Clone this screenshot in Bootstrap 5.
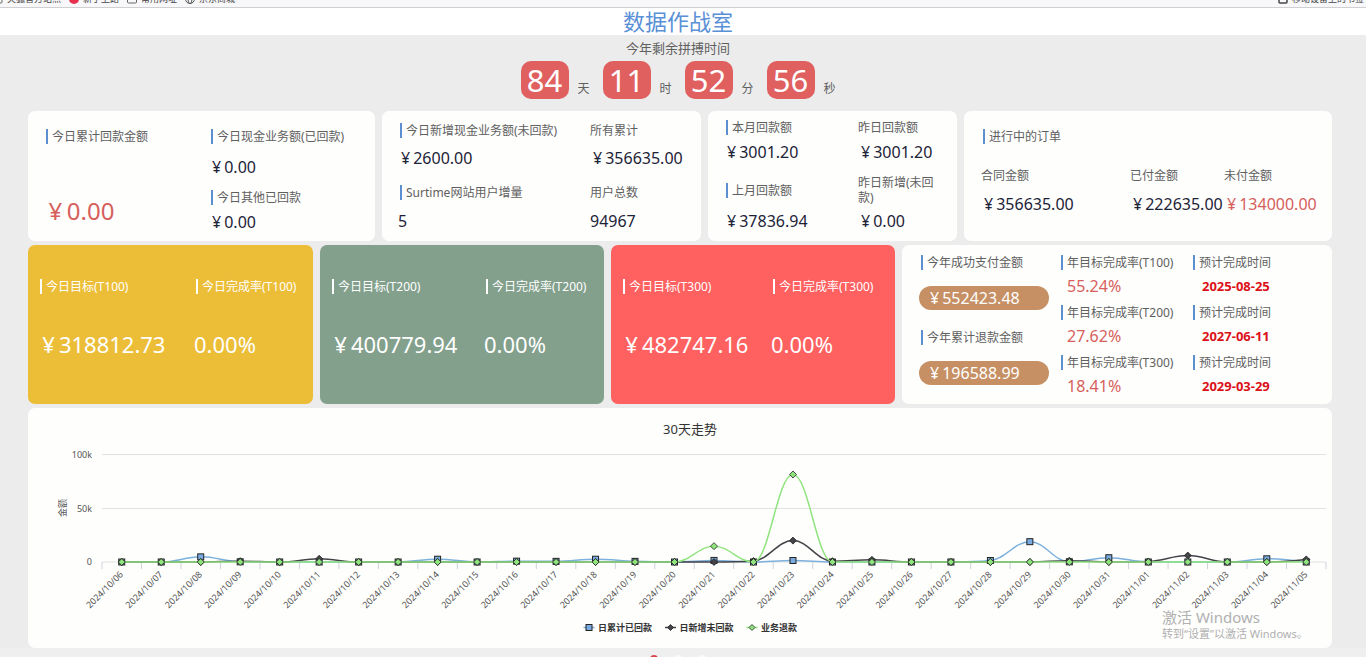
<!DOCTYPE html>
<html lang="zh-CN">
<head>
<meta charset="utf-8">
<meta name="viewport" content="width=device-width, initial-scale=1">
<title>数据作战室</title>
<link href="https://cdn.jsdelivr.net/npm/bootstrap@5.3.0/dist/css/bootstrap.min.css" rel="stylesheet">
<style>
  body { font-family: "Noto Sans", "Noto Sans CJK SC", sans-serif; background: #ececec; color: #606060; font-size: 12px; line-height: 15px; }
  .browser-bar { height: 8px; background: #f8f8fa; border-bottom: 1px solid #d0d0d2; font-size: 9px; line-height: 12px; padding: 0 2px 2px 0; }
  .browser-bar a { color: #444; height: 12px; }
  .browser-bar a:first-child svg { margin-left: -7px; }
  .browser-bar svg { width: 10px; height: 10px; }
  .title-band { background: #fff; height: 27px; padding-right: 10px; }
  .title-band h1 { font-size: 22px; line-height: 27px; color: #5a90d6; font-weight: 400; }
  .hero { padding: 4px 10px 12px 0; height: 76px; }
  .hero p { font-size: 13px; line-height: 18px; }
  .clock-row { padding-left: 13px; }
  .tick-box { width: 48px; height: 38px; border-radius: 10px; background: #e05f5f; color: #fff; font-size: 31px; line-height: 38px; }
  .tick-unit { width: 34px; line-height: 20px; padding-left: 9px; }
  .board { padding: 0 34px 0 28px; display: grid; gap: 4px; }
  .row-top, .row-mid { display: grid; gap: 7px; }
  .row-top { grid-template-columns: 347fr 319fr 249fr 368fr; min-height: 130px; }
  .row-mid { grid-template-columns: 285fr 284fr 284fr 430fr; min-height: 159px; }
  .panel { background: #fefefd; border-radius: 7px; }
  .lbl { margin-left: 2px; padding-left: 4px; border-left: 2px solid #5b8fd0; height: 15px; line-height: 15px; white-space: nowrap; }
  .val { font-size: 16px; line-height: 20px; color: #1d2337; white-space: nowrap; }
  .val-red { color: #d65f5c; }
  .val-big { font-size: 24px; line-height: 42px; color: #d65f5c; }
  .val-lg { font-size: 22px; line-height: 28px; white-space: nowrap; }
  .yen { display: inline-block; width: .95em; text-align: center; }
  .stat-grid { display: grid; align-items: center; align-content: start; }
  .p-income { grid-template-columns: 165fr 166fr; grid-template-rows: 15px 46px 14px 36px; padding: 18px 0 0 16px; }
  .p-income .val-big { grid-row: 3 / 5; grid-column: 1; align-self: start; }
  .p-users { grid-template-columns: 192fr 111fr; grid-template-rows: 15px 40px 28px 30px; padding: 12px 0 0 16px; }
  .p-month { grid-template-columns: 134fr 83fr; grid-template-rows: 15px 34px 42px 20px; padding: 9px 16px 0 16px; }
  .p-orders { grid-template-columns: 149fr 94fr 108fr; grid-template-rows: 28px 15px 20px; row-gap: 11px; padding: 18px 0 0 17px; }
  .p-orders .lbl { grid-column: 1 / 4; align-self: start; }
  .target { color: #fff; padding: 34px 0 0 10px; grid-template-rows: 15px 99px; }
  .target .lbl { border-color: #fff; }
  .t100 { background: #ecbe38; grid-template-columns: 156fr 119fr; }
  .t200 { background: #82a08c; grid-template-columns: 154fr 120fr; }
  .t300 { background: #ff6060; grid-template-columns: 150fr 124fr; }
  .p-year { display: grid; grid-template-columns: 140fr 132fr 141fr; padding: 10px 0 0 17px; }
  .pill { width: 130px; height: 24px; line-height: 24px; border-radius: 12px; background: #c69064; color: #fff; padding-left: 8px; }
  .pay .lbl { margin-bottom: 16px; }
  .pay + .pay { margin-top: 20px; }
  .goal + .goal { margin-top: 9px; }
  .goal .val { margin: 6px 0 0 8px; }
  .goal-date { font-size: 13px; line-height: 20px; font-weight: 700; color: #dc1018; margin: 6px 0 0 11px; }
  .chart-panel svg { display: block; width: 100%; height: auto; }
  .chart-panel svg text { font-size: 9px; fill: #555; }
  .chart-panel svg .chart-title { font-size: 13px; fill: #333; }
  .chart-panel svg .legend-label { font-weight: 700; fill: #333; }
  .notice { position: absolute; right: 26px; bottom: 7px; width: 144px; color: #b0b0b0; white-space: nowrap; font-size: 11px; line-height: 14px; }
  .notice strong { font-size: 15px; line-height: 20px; font-weight: 400; }
  .dock { height: 9px; background: #efefef; padding-right: 10px; }
  .dock span { width: 8px; height: 8px; border-radius: 50%; margin: 7px 8px 0; background: #fafafa; flex: none; }
  .dock .rec { background: #d9434a; }
</style>
</head>
<body class="overflow-hidden">
<nav class="browser-bar d-flex align-items-end overflow-hidden">
  <a href="#" class="d-flex align-items-center text-decoration-none text-nowrap"><svg viewBox="0 0 10 10" class="me-1"><rect x="1" y="1" width="8" height="8" rx="1" fill="none" stroke="#666"/></svg>火狐官方站点</a>
  <a href="#" class="d-flex align-items-center text-decoration-none text-nowrap ms-2"><svg viewBox="0 0 10 10" class="me-1"><circle cx="5" cy="5" r="5" fill="#e8304e"/></svg>新手上路</a>
  <a href="#" class="d-flex align-items-center text-decoration-none text-nowrap ms-2"><svg viewBox="0 0 10 10" class="me-1"><rect x="0.5" y="1" width="9" height="8" rx="1" fill="none" stroke="#666"/></svg>常用网址</a>
  <a href="#" class="d-flex align-items-center text-decoration-none text-nowrap ms-2"><svg viewBox="0 0 10 10" class="me-1"><g fill="none" stroke="#555"><circle cx="5" cy="5" r="4.5"/><ellipse cx="5" cy="5" rx="2" ry="4.5"/></g></svg>京东商城</a>
  <a href="#" class="d-flex align-items-center text-decoration-none text-nowrap ms-auto"><svg viewBox="0 0 10 10" class="me-1"><rect x="1" y="1" width="8" height="8" rx="1" fill="none" stroke="#444" stroke-width="1.5"/></svg>移动设备上的书签</a>
</nav>
<header class="title-band text-center"><h1 class="m-0">数据作战室</h1></header>
<section class="hero text-center">
  <p class="m-0">今年剩余拼搏时间</p>
  <div class="d-flex justify-content-center align-items-end mt-1 clock-row">
    <span class="tick-box">84</span><span class="tick-unit text-start">天</span>
    <span class="tick-box">11</span><span class="tick-unit text-start">时</span>
    <span class="tick-box">52</span><span class="tick-unit text-start">分</span>
    <span class="tick-box">56</span><span class="tick-unit text-start">秒</span>
  </div>
</section>
<main class="board">
  <div class="row-top">
    <section class="panel stat-grid p-income">
      <div class="lbl">今日累计回款金额</div><div class="lbl">今日现金业务额(已回款)</div>
      <div></div><div class="val"><span class="yen">¥</span>0.00</div>
      <div class="val-big"><span class="yen">¥</span>0.00</div><div class="lbl">今日其他已回款</div>
      <div class="val"><span class="yen">¥</span>0.00</div>
    </section>
    <section class="panel stat-grid p-users">
      <div class="lbl">今日新增现金业务额(未回款)</div><div>所有累计</div>
      <div class="val"><span class="yen">¥</span>2600.00</div><div class="val"><span class="yen">¥</span>356635.00</div>
      <div class="lbl">Surtime网站用户增量</div><div>用户总数</div>
      <div class="val">5</div><div class="val">94967</div>
    </section>
    <section class="panel stat-grid p-month">
      <div class="lbl">本月回款额</div><div>昨日回款额</div>
      <div class="val"><span class="yen">¥</span>3001.20</div><div class="val"><span class="yen">¥</span>3001.20</div>
      <div class="lbl">上月回款额</div><div>昨日新增(未回款)</div>
      <div class="val"><span class="yen">¥</span>37836.94</div><div class="val"><span class="yen">¥</span>0.00</div>
    </section>
    <section class="panel stat-grid p-orders">
      <div class="lbl">进行中的订单</div>
      <div>合同金额</div><div>已付金额</div><div>未付金额</div>
      <div class="val"><span class="yen">¥</span>356635.00</div><div class="val"><span class="yen">¥</span>222635.00</div><div class="val val-red"><span class="yen">¥</span>134000.00</div>
    </section>
  </div>
  <div class="row-mid">
    <section class="panel stat-grid target t100">
      <div class="lbl">今日目标(T100)</div><div class="lbl">今日完成率(T100)</div>
      <div class="val-lg"><span class="yen">¥</span>318812.73</div><div class="val-lg">0.00%</div>
    </section>
    <section class="panel stat-grid target t200">
      <div class="lbl">今日目标(T200)</div><div class="lbl">今日完成率(T200)</div>
      <div class="val-lg"><span class="yen">¥</span>400779.94</div><div class="val-lg">0.00%</div>
    </section>
    <section class="panel stat-grid target t300">
      <div class="lbl">今日目标(T300)</div><div class="lbl">今日完成率(T300)</div>
      <div class="val-lg"><span class="yen">¥</span>482747.16</div><div class="val-lg">0.00%</div>
    </section>
    <section class="panel p-year">
      <div>
        <div class="pay"><div class="lbl">今年成功支付金额</div><div class="val pill"><span class="yen">¥</span>552423.48</div></div>
        <div class="pay"><div class="lbl">今年累计退款金额</div><div class="val pill"><span class="yen">¥</span>196588.99</div></div>
      </div>
      <div>
        <div class="goal"><div class="lbl">年目标完成率(T100)</div><div class="val val-red">55.24%</div></div>
        <div class="goal"><div class="lbl">年目标完成率(T200)</div><div class="val val-red">27.62%</div></div>
        <div class="goal"><div class="lbl">年目标完成率(T300)</div><div class="val val-red">18.41%</div></div>
      </div>
      <div>
        <div class="goal"><div class="lbl">预计完成时间</div><div class="goal-date">2025-08-25</div></div>
        <div class="goal"><div class="lbl">预计完成时间</div><div class="goal-date">2027-06-11</div></div>
        <div class="goal"><div class="lbl">预计完成时间</div><div class="goal-date">2029-03-29</div></div>
      </div>
    </section>
  </div>
  <section class="panel chart-panel position-relative">
    <svg id="trend" viewBox="0 0 1304 240" role="img" aria-label="30天走势"></svg>
    <div class="notice"><strong>激活 Windows</strong><br>转到“设置”以激活 Windows。</div>
  </section>
</main>
<footer class="dock d-flex justify-content-center overflow-hidden"><span class="rec"></span><span></span><span></span></footer>
<script src="https://cdn.jsdelivr.net/npm/bootstrap@5.3.0/dist/js/bootstrap.bundle.min.js"></script>
<script>
  // Daily amounts in thousands, 2024/10/06 to 2024/11/05
  const paid   = [0,0,4.8,.2,0,0,0,0,2.6,0,.8,.6,2.6,.6,0,1.5,0,1.4,0,0,0,0,1.4,19,.2,4,0,0,0,3,0];
  const unpaid = [0,0,0,.8,0,3,0,0,0,0,0,0,0,0,0,0,1,20,.8,2,0,0,0,0,1.2,0,.5,6,0,0,2.4];
  const refund = [0,0,0,0,0,0,0,0,0,0,0,0,0,0,0,14.8,0,81.8,0,0,0,0,0,0,0,0,0,0,0,0,0];
  const left = 74, right = 1298, base = 154, unit = 1.07, step = (right - left) / paid.length;
  const px = i => left + step * (i + .5), py = v => base - v * unit;
  const diamond = (x, y, r, fill) => `<path d="M${x} ${y - r}L${x + r} ${y}L${x} ${y + r}L${x - r} ${y}Z" fill="${fill}" stroke="#222" stroke-width=".8"/>`;
  const square = (x, y) => `<rect x="${x - 3}" y="${y - 3}" width="6" height="6" fill="#7aabe0" stroke="#222"/>`;

  function spline(values) {
    const p = values.map((v, i) => [px(i), py(v)]);
    let d = `M${p[0]}`, rc = p[0];
    for (let i = 1; i < p.length; i++) {
      const [x, y] = p[i], [lx, ly] = p[i - 1];
      let lc = p[i], next = p[i];
      if (i < p.length - 1) {
        const [nx, ny] = p[i + 1];
        const cx1 = (1.5 * x + lx) / 2.5, cx2 = (1.5 * x + nx) / 2.5;
        let a = (1.5 * y + ly) / 2.5, b = (1.5 * y + ny) / 2.5;
        const fix = (b - a) * (cx2 - x) / (cx2 - cx1) + y - b;
        a += fix; b += fix;
        if (a > ly && a > y) { a = Math.max(ly, y); b = 2 * y - a; }
        else if (a < ly && a < y) { a = Math.min(ly, y); b = 2 * y - a; }
        if (b > ny && b > y) { b = Math.max(ny, y); a = 2 * y - b; }
        else if (b < ny && b < y) { b = Math.min(ny, y); a = 2 * y - b; }
        lc = [cx1, a]; next = [cx2, b];
      }
      d += `C${rc} ${lc} ${p[i]}`;
      rc = next;
    }
    return d;
  }

  let s = '<text class="chart-title" x="662" y="26" text-anchor="middle">30天走势</text>';
  [[100, '100k'], [50, '50k'], [0, '0']].forEach(([v, t]) => {
    const y = Math.round(py(v)) - (v ? .5 : 0);
    s += `<path d="M${left} ${y}H${right}" stroke="#e2e2e2"/><text x="64" y="${y + 3}" text-anchor="end">${t}</text>`;
  });
  s += '<text transform="translate(38 100) rotate(-90)" text-anchor="middle">金额</text>';
  for (let i = 0; i <= paid.length; i++) s += `<path d="M${left + i * step} ${base}v7" stroke="#ccd3dc"/>`;
  const start = Date.UTC(2024, 9, 6);
  paid.forEach((_, i) => {
    const t = new Date(start + i * 864e5).toISOString().slice(0, 10).replace(/-/g, '/');
    s += `<text transform="translate(${px(i) + 2} 167) rotate(-45)" text-anchor="end">${t}</text>`;
  });
  [[paid, '#7cb0dd', square], [unpaid, '#434348', (x, y) => diamond(x, y, 3.5, '#434348')], [refund, '#90e47d', (x, y) => diamond(x, y, 3.5, '#90e47d')]]
    .forEach(([data, color, mark]) => {
      s += `<path d="${spline(data)}" fill="none" stroke="${color}" stroke-width="1.5"/>`;
      s += data.map((v, i) => mark(px(i), py(v))).join('');
    });
  [[561, '#7cb0dd', square(561, 219.5), '日累计已回款'], [642.5, '#434348', diamond(642.5, 219.5, 3, '#434348'), '日新增未回款'], [724, '#90e47d', diamond(724, 219.5, 3, '#90e47d'), '业务退款']]
    .forEach(([x, c, m, t]) => {
      s += `<path d="M${x - 5.5} 219.5h11" stroke="${c}" stroke-width="1.5"/>${m}<text class="legend-label" x="${x + 9}" y="223">${t}</text>`;
    });
  document.getElementById('trend').innerHTML = s;
</script>
</body>
</html>
